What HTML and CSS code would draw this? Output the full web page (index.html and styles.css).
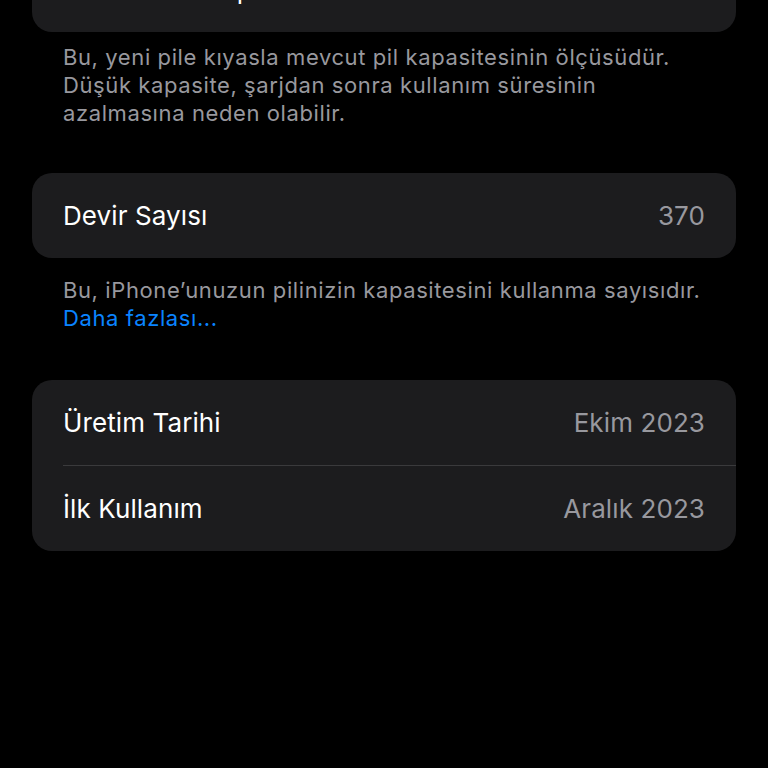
FILE: index.html
```html
<!DOCTYPE html>
<html lang="tr">
<head>
    <meta charset="UTF-8">
    <meta name="viewport" content="width=device-width, initial-scale=1.0">
    <title>Pil Durumu</title>
    <link rel="stylesheet" href="styles.css">
</head>
<body>
    <div class="container">
        <section class="group group-top">
            <div class="row">
                <span class="label">Maksimum Kapasite</span>
                <span class="value">%88</span>
            </div>
        </section>
        <p class="footnote">Bu, yeni pile kıyasla mevcut pil kapasitesinin ölçüsüdür. Düşük kapasite, şarjdan sonra kullanım süresinin azalmasına neden olabilir.</p>

        <section class="group">
            <div class="row">
                <span class="label">Devir Sayısı</span>
                <span class="value">370</span>
            </div>
        </section>
        <p class="footnote footnote-link">Bu, iPhone’unuzun pilinizin kapasitesini kullanma sayısıdır. <a href="#" class="link">Daha fazlası...</a></p>

        <section class="group">
            <div class="row">
                <span class="label">Üretim Tarihi</span>
                <span class="value">Ekim 2023</span>
            </div>
            <div class="row">
                <span class="label">İlk Kullanım</span>
                <span class="value">Aralık 2023</span>
            </div>
        </section>
    </div>
</body>
</html>
```

FILE: styles.css
```css
body {
    margin: 0;
    background: #000;
    color: #fff;
    font-family: 'Inter', 'Roboto', sans-serif;
    overflow: hidden;
}

.container {
    padding: 0 32px;
}

.group {
    background: #1c1c1e;
    border-radius: 20px;
    overflow: hidden;
}

.group-top {
    margin-top: -53px;
}

.row {
    display: flex;
    justify-content: space-between;
    align-items: center;
    height: 85px;
    margin-left: 31px;
    padding-right: 31px;
    font-size: 26px;
    letter-spacing: 0.1px;
}

.row + .row {
    border-top: 1px solid #3a3a3c;
    height: 85px;
}

.value {
    color: #98989e;
}

.footnote {
    margin: 0;
    padding: 11px 31px 46px;
    font-size: 22px;
    line-height: 28px;
    letter-spacing: 0.6px;
    color: #98989e;
}

.footnote-link {
    padding-top: 18px;
    padding-bottom: 48px;
}

.link {
    display: block;
    color: #0a84ff;
    text-decoration: none;
}
```
